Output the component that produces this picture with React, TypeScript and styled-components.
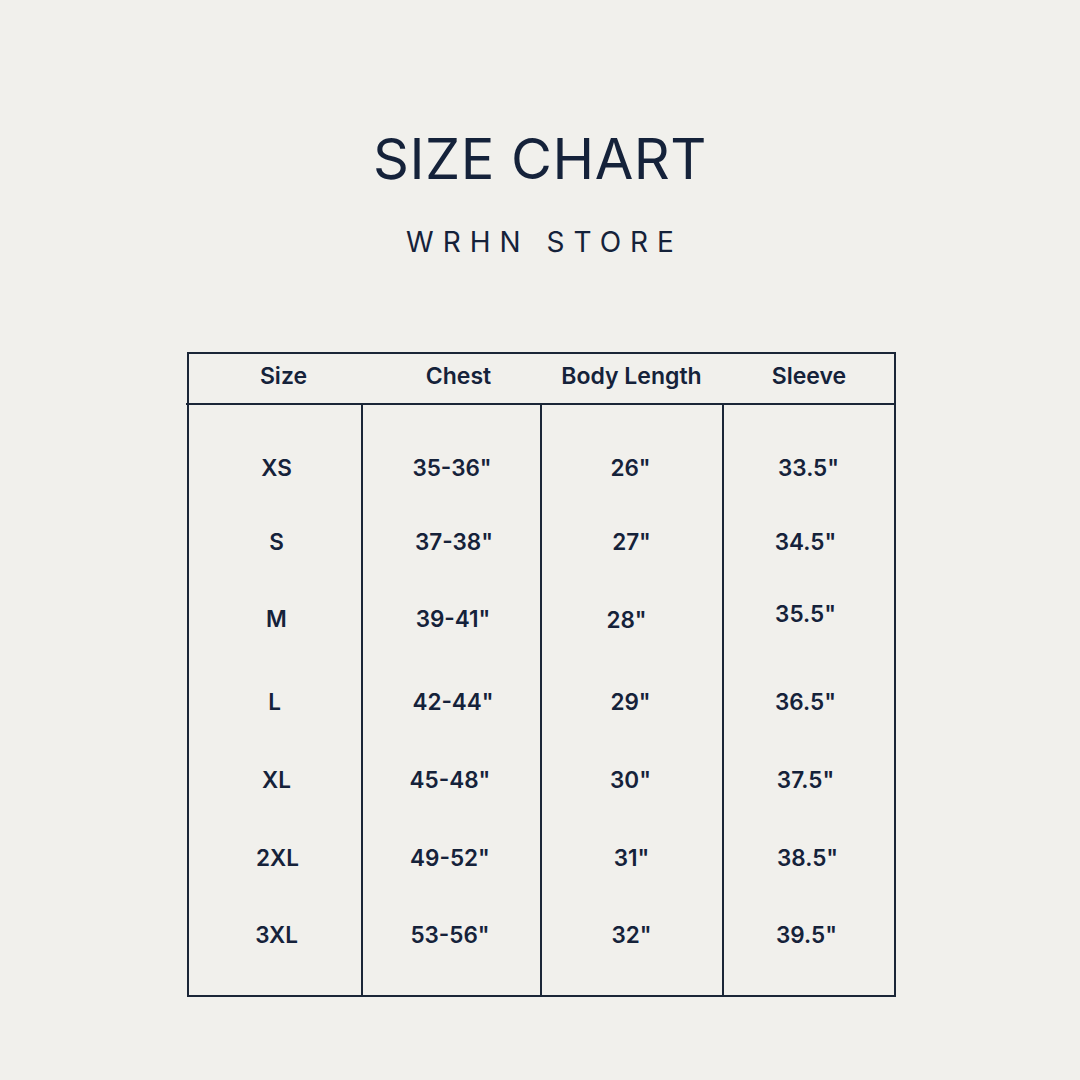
import React from "react";
import styled, { createGlobalStyle } from "styled-components";

const Global = createGlobalStyle`
  html, body { margin: 0; padding: 0; background: #f1f0ec; }
  body { font-family: Inter, "Noto Sans", sans-serif; color: #15223a; }
`;

const Page = styled.div`
  width: 1080px;
  height: 1080px;
  background: #f1f0ec;
  display: flex;
  flex-direction: column;
  align-items: center;
  box-sizing: border-box;
  padding-top: 126px;
`;

const Title = styled.h1`
  margin: 0;
  font-family: Inter, sans-serif;
  font-weight: 400;
  font-size: 56px;
  line-height: 66px;
  letter-spacing: 0.5px;
  color: #15223a;
`;

const Subtitle = styled.div`
  margin-top: 33px;
  font-family: Inter, sans-serif;
  font-weight: 400;
  font-size: 28px;
  line-height: 34px;
  letter-spacing: 9px;
  margin-right: -9px;
  color: #15223a;
`;

const Table = styled.div`
  margin-top: 93px;
  margin-left: 2px;
  width: 709px;
  box-sizing: border-box;
  border: 2px solid #1b2637;
  display: flex;
  flex-direction: column;
`;

const HeaderRow = styled.div`
  display: grid;
  grid-template-columns: 190px 160px 186px 169px;
  height: 49px;
  border-bottom: 2px solid #1b2637;
  margin-left: -3px;
  padding-left: 3px;
  align-items: center;
`;

const HeaderCell = styled.div`
  text-align: center;
  font-size: 23px;
  font-weight: 600;
  line-height: 26px;
  margin-top: -5px;
  white-space: nowrap;
`;

const Body = styled.div`
  display: grid;
  grid-template-columns: 174px 179px 182px 170px;
  height: 590px;
`;

const Column = styled.div<{ $last?: boolean }>`
  display: flex;
  flex-direction: column;
  border-right: ${(p) => (p.$last ? "none" : "2px solid #1b2637")};
  padding-top: 48px;
`;

const Cell = styled.div<{ $gap: number; $dx: number; $dy: number }>`
  height: 30px;
  line-height: 30px;
  margin-top: ${(p) => p.$gap}px;
  text-align: center;
  font-size: 22.5px;
  font-weight: 600;
  transform: translate(${(p) => p.$dx}px, ${(p) => p.$dy}px);
  white-space: nowrap;
`;

const rowTops = [47, 121, 198, 281, 359, 437, 514];

type Col = { header: string; values: string[]; dx: number[]; dy?: number[] };

const columns: Col[] = [
  {
    header: "Size",
    values: ["XS", "S", "M", "L", "XL", "2XL", "3XL"],
    dx: [2, 2, 2, 0, 2, 3, 2],
  },
  {
    header: "Chest",
    values: ['35-36"', '37-38"', '39-41"', '42-44"', '45-48"', '49-52"', '53-56"'],
    dx: [1, 3, 2, 2, -1, -1, -1],
  },
  {
    header: "Body Length",
    values: ['26"', '27"', '28"', '29"', '30"', '31"', '32"'],
    dx: [-1, 0, -5, -1, -1, 0, 0],
    dy: [0, 0, 1, 0, 0, 0, 0],
  },
  {
    header: "Sleeve",
    values: ['33.5"', '34.5"', '35.5"', '36.5"', '37.5"', '38.5"', '39.5"'],
    dx: [0, -3, -3, -3, -3, -1, -2],
    dy: [0, 0, -5, 0, 0, 0, 0],
  },
];

export default function App() {
  return (
    <>
      <Global />
      <Page>
        <Title>SIZE CHART</Title>
        <Subtitle>WRHN STORE</Subtitle>
        <Table>
          <HeaderRow>
            {columns.map((c) => (
              <HeaderCell key={c.header}>{c.header}</HeaderCell>
            ))}
          </HeaderRow>
          <Body>
            {columns.map((c, ci) => (
              <Column key={c.header} $last={ci === columns.length - 1}>
                {c.values.map((v, i) => (
                  <Cell
                    key={v}
                    $gap={i === 0 ? 0 : rowTops[i] - rowTops[i - 1] - 30}
                    $dx={c.dx[i]}
                    $dy={c.dy ? c.dy[i] : 0}
                  >
                    {v}
                  </Cell>
                ))}
              </Column>
            ))}
          </Body>
        </Table>
      </Page>
    </>
  );
}
